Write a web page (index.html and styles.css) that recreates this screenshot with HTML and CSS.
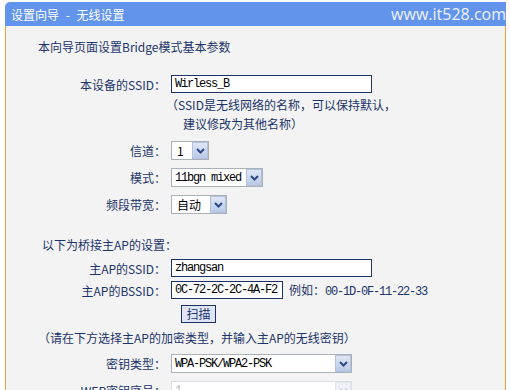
FILE: index.html
```html
<!DOCTYPE html>
<html>

<head>
  <title>无线设置</title>
  <link rel="stylesheet" href="styles.css">
</head>

<body>
  <div class="panel">
    <!-- title bar -->
    <div class="title">
      <span class="title-text">设置向导 - 无线设置</span>
      <span class="mark">www.it528.com</span>
    </div>

    <div class="content">
      <p class="intro">本向导页面设置Bridge模式基本参数</p>

      <div class="row row-input">
        <span class="lbl">本设备的SSID：</span>
        <span class="input w-long">Wirless_B</span>
      </div>
      <div class="hint">（SSID是无线网络的名称，可以保持默认，</div>
      <div class="hint indent">建议修改为其他名称）</div>

      <div class="row row-select first">
        <span class="lbl">信道：</span>
        <span class="select w-chan"><span class="val">1</span><span class="arrow"><svg width="9" height="6" viewBox="0 0 9 6"><path d="M1 1 L4.5 4.5 L8 1" fill="none" stroke="#2c4a86" stroke-width="2"/></svg></span></span>
      </div>
      <div class="row row-select">
        <span class="lbl">模式：</span>
        <span class="select w-mode"><span class="val mono">11bgn mixed</span><span class="arrow"><svg width="9" height="6" viewBox="0 0 9 6"><path d="M1 1 L4.5 4.5 L8 1" fill="none" stroke="#2c4a86" stroke-width="2"/></svg></span></span>
      </div>
      <div class="row row-select">
        <span class="lbl">频段带宽：</span>
        <span class="select w-band"><span class="val">自动</span><span class="arrow"><svg width="9" height="6" viewBox="0 0 9 6"><path d="M1 1 L4.5 4.5 L8 1" fill="none" stroke="#2c4a86" stroke-width="2"/></svg></span></span>
      </div>

      <p class="section">以下为桥接主AP的设置：</p>

      <div class="row row-input ap-first">
        <span class="lbl">主AP的SSID：</span>
        <span class="input w-long">zhangsan</span>
      </div>
      <div class="row row-input">
        <span class="lbl">主AP的BSSID：</span>
        <span class="input w-mac">0C-72-2C-2C-4A-F2</span>
        <span class="example">例如：<span class="mono-n">00-1D-0F-11-22-33</span></span>
      </div>
      <div class="row row-input scan-row">
        <span class="lbl"></span>
        <button class="scan-btn" type="button">扫描</button>
      </div>

      <p class="note">（请在下方选择主AP的加密类型，并输入主AP的无线密钥）</p>

      <div class="row row-select key-row">
        <span class="lbl">密钥类型：</span>
        <span class="select w-key"><span class="val mono">WPA-PSK/WPA2-PSK</span><span class="arrow"><svg width="9" height="6" viewBox="0 0 9 6"><path d="M1 1 L4.5 4.5 L8 1" fill="none" stroke="#2c4a86" stroke-width="2"/></svg></span></span>
      </div>
      <div class="row row-select">
        <span class="lbl">WEP密钥序号：</span>
        <span class="select w-key disabled"><span class="val mono">1</span><span class="arrow"><svg width="9" height="6" viewBox="0 0 9 6"><path d="M1 1 L4.5 4.5 L8 1" fill="none" stroke="#c4ccd8" stroke-width="2"/></svg></span></span>
      </div>
    </div>
  </div>
</body>

</html>
```

FILE: styles.css
```css
body {
  margin: 0;
  background-color: #fff;
  font-family: "Noto Sans CJK SC", "DejaVu Sans", sans-serif;
  font-size: 12px;
  color: #1b3469;
}

.panel {
  margin-left: 5px;
  width: 501px;
  padding-top: 2px;
}

.title {
  height: 24px;
  background-color: #6394ec;
  border-top-left-radius: 5px;
  display: flex;
  align-items: center;
  justify-content: space-between;
  color: #fff;
}

.title-text {
  margin-left: 6px;
  font-size: 12px;
  word-spacing: 4px;
}

.mark {
  font-family: "Open Sans", sans-serif;
  font-size: 16px;
  color: #eef2fc;
  margin-right: 0;
}

.content {
  background-color: #f3f3f3;
  border-left: 1px solid #f2a040;
  border-right: 1px solid #f2a040;
  min-height: 380px;
}

.intro {
  margin: 0;
  padding-top: 11px;
  padding-left: 32px;
  line-height: 20px;
}

.row {
  display: flex;
  align-items: center;
}

.row-input {
  height: 22px;
}

.row-select {
  height: 27px;
}

.row-input:first-of-type {
  margin-top: 16px;
}

.lbl {
  width: 160px;
  text-align: right;
  margin-right: 5px;
  flex-shrink: 0;
  white-space: nowrap;
}

.input {
  box-sizing: border-box;
  height: 18px;
  background-color: #fff;
  border: 1px solid #1f3264;
  padding-left: 3px;
  font-family: "Liberation Mono", monospace;
  font-size: 12px;
  letter-spacing: -1.2px;
  line-height: 16px;
  color: #000;
}

.w-long {
  width: 201px;
}

.w-mac {
  width: 112px;
}

.hint {
  margin-left: 160px;
  line-height: 19px;
}

.hint.indent {
  margin-left: 177px;
}

.first {
  margin-top: 4px;
}

.select {
  box-sizing: border-box;
  height: 19px;
  display: flex;
  align-items: center;
  justify-content: space-between;
  background-color: #fff;
  border: 1px solid #a9b0b8;
  color: #000;
}

.val {
  padding-left: 5px;
  white-space: nowrap;
}

.mono {
  font-family: "Liberation Mono", monospace;
  letter-spacing: -1.2px;
  padding-left: 3px;
}

.arrow {
  box-sizing: border-box;
  width: 16px;
  height: 17px;
  display: flex;
  align-items: center;
  justify-content: center;
  background: linear-gradient(#dfe7f6, #b9c9e6);
  border: 1px solid #b3c1dc;
}

.w-chan {
  width: 38px;
}

.w-mode {
  width: 92px;
}

.w-band {
  width: 56px;
}

.w-key {
  width: 181px;
}

.disabled {
  border-color: #dcdfe3;
  color: #b8b8b8;
}

.disabled .arrow {
  background: #eef1f6;
  border-color: #e2e6ee;
}

.section {
  margin: 0;
  margin-top: 17px;
  padding-left: 36px;
  line-height: 20px;
}

.ap-first {
  margin-top: 2px;
}

.example {
  margin-left: 6px;
  white-space: nowrap;
}

.mono-n {
  font-family: "Liberation Mono", monospace;
  letter-spacing: -1.2px;
}

.scan-row {
  margin-top: 2px;
}

.scan-btn {
  margin-left: 10px;
  box-sizing: border-box;
  width: 35px;
  height: 18px;
  padding: 0;
  background-color: #dfe5f7;
  border: 1px solid #1f3264;
  font-family: "Noto Sans CJK SC", sans-serif;
  font-size: 12px;
  color: #1b3469;
  line-height: 16px;
}

.note {
  margin: 0;
  margin-top: 3px;
  padding-left: 32px;
  line-height: 20px;
}

.key-row {
  margin-top: 2px;
}
```
